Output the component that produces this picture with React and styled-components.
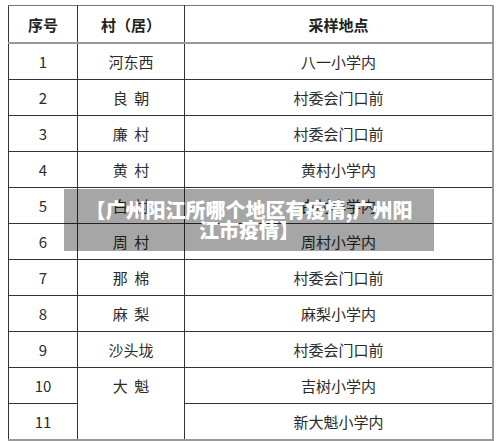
import React from 'react'
import styled, { createGlobalStyle } from 'styled-components'

const Global = createGlobalStyle`
    html, body {
        margin: 0;
        padding: 0;
        background: #fff;
    }
    body {
        font-family: "Noto Sans CJK SC", "Noto Sans", sans-serif;
    }
`;

const Page = styled.div`
    position: relative;
    width: 500px;
    height: 441px;
    overflow: hidden;
    padding: 5px 0 0 8px;
    box-sizing: border-box;
`;

const Table = styled.table`
    border-collapse: collapse;
    table-layout: fixed;
    width: 486px;
    color: #2b2b2b;
    font-size: 15px;
    border-top: 1px solid #777;
    border-right: 2px solid #999;
    border-bottom: 2px solid #999;
    border-left: 1px solid #333;
`;

const Head = styled.th`
    height: 36px;
    padding: 0;
    font-weight: bold;
    color: #222;
    text-align: center;
    border-right: 1px solid #333;
    border-bottom: 2px solid #999;
`;

const Cell = styled.td`
    height: 35px;
    padding: 0;
    text-align: center;
    vertical-align: ${p => (p.top ? 'top' : 'middle')};
    line-height: ${p => (p.top ? '35px' : 'normal')};
    border-right: 1px solid #333;
    border-bottom: 1px solid #333;
`;

const Caption = styled.div`
    position: absolute;
    top: 189px;
    left: 64px;
    width: 370px;
    height: 62px;
    padding: 0 20px;
    box-sizing: border-box;
    display: flex;
    align-items: center;
    justify-content: center;
    text-align: center;
    background: rgba(0, 0, 0, 0.35);
    color: #fff;
    font-weight: 900;
    font-size: 20px;
    line-height: 20px;
`;

const rows = [
    ['1', '河东西', '八一小学内'],
    ['2', '良\u00a0\u00a0朝', '村委会门口前'],
    ['3', '廉\u00a0\u00a0村', '村委会门口前'],
    ['4', '黄\u00a0\u00a0村', '黄村小学内'],
    ['5', '白\u00a0\u00a0村', '白村小学内'],
    ['6', '周\u00a0\u00a0村', '周村小学内'],
    ['7', '那\u00a0\u00a0棉', '村委会门口前'],
    ['8', '麻\u00a0\u00a0梨', '麻梨小学内'],
    ['9', '沙头垅', '村委会门口前'],
]

function App() {
    return (
        <Page>
            <Global />
            <Table>
                <colgroup>
                    <col style={{ width: 69 }} />
                    <col style={{ width: 107 }} />
                    <col />
                </colgroup>
                <thead>
                    <tr>
                        <Head>序号</Head>
                        <Head>村（居）</Head>
                        <Head>采样地点</Head>
                    </tr>
                </thead>
                <tbody>
                    {rows.map(r => (
                        <tr key={r[0]}>
                            <Cell>{r[0]}</Cell>
                            <Cell>{r[1]}</Cell>
                            <Cell>{r[2]}</Cell>
                        </tr>
                    ))}
                    <tr>
                        <Cell>10</Cell>
                        <Cell rowSpan={2} top>大&nbsp;&nbsp;魁</Cell>
                        <Cell>吉树小学内</Cell>
                    </tr>
                    <tr>
                        <Cell>11</Cell>
                        <Cell>新大魁小学内</Cell>
                    </tr>
                </tbody>
            </Table>
            <Caption>【广州阳江所哪个地区有疫情,广州阳江市疫情】</Caption>
        </Page>
    )
}

export default App
